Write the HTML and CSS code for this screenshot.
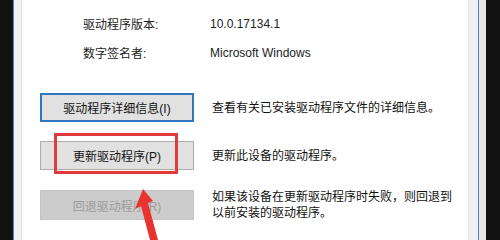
FILE: index.html
```html
<!DOCTYPE html>
<html lang="zh-CN">
<head>
  <meta charset="UTF-8">
  <title>驱动程序</title>
  <link rel="stylesheet" href="styles.css">
</head>
<body>
  <div class="screen">
    <div class="edge-black left"></div>
    <div class="frame-line"></div>
    <div class="frame-gray left-gap"></div>

    <div class="page">
      <div class="props">
        <div class="prop">
          <span class="prop-label">驱动程序版本:</span>
          <span class="prop-value">10.0.17134.1</span>
        </div>
        <div class="prop">
          <span class="prop-label">数字签名者:</span>
          <span class="prop-value">Microsoft Windows</span>
        </div>
      </div>

      <div class="actions">
        <div class="action">
          <button class="btn btn-focus">驱动程序详细信息(I)</button>
          <p class="action-desc">查看有关已安装驱动程序文件的详细信息。</p>
        </div>
        <div class="action">
          <button class="btn">更新驱动程序(P)</button>
          <p class="action-desc">更新此设备的驱动程序。</p>
        </div>
        <div class="action">
          <button class="btn" disabled>回退驱动程序(R)</button>
          <p class="action-desc">如果该设备在更新驱动程序时失败，则回退到<br>以前安装的驱动程序。</p>
        </div>
      </div>
    </div>

    <div class="frame-gray right-gap"></div>
    <div class="frame-line"></div>
    <div class="frame-gray outer-gap"></div>
    <div class="edge-black right"></div>

    <!-- annotation -->
    <div class="highlight"></div>
    <svg class="arrow" width="500" height="240" viewBox="0 0 500 240">
      <polygon points="143,189 135,209 141,206 150,240 158,240 148,203 153,201" fill="#e8332f"/>
    </svg>
  </div>
</body>
</html>
```

FILE: styles.css
```css
body {
  margin: 0;
  padding: 0;
  background: #111;
  font-family: "Liberation Sans", "Noto Sans CJK SC", sans-serif;
  font-size: 12px;
}

.screen {
  position: relative;
  width: 500px;
  height: 240px;
  display: flex;
  overflow: hidden;
}

.edge-black {
  background: #111;
}

.edge-black.left {
  width: 13px;
}

.edge-black.right {
  width: 14px;
}

.frame-line {
  width: 1px;
  background: #4f86c2;
}

.frame-gray {
  background: #eef0f2;
}

.left-gap {
  width: 8px;
  border-right: 1px solid #e2e2e2;
  box-sizing: border-box;
}

.right-gap {
  width: 10px;
  border-left: 1px solid #e6e6e6;
  box-sizing: border-box;
}

.outer-gap {
  width: 7px;
  background: #e4e6e8;
}

.page {
  width: 446px;
  background: #fff;
  padding: 9px 0 0 18px;
  box-sizing: border-box;
}

.props {
  margin-left: 43px;
}

.prop {
  display: flex;
  height: 29px;
  align-items: center;
  color: #222;
}

.prop-label {
  width: 127px;
}

.actions {
  margin-top: 26px;
  display: flex;
  flex-direction: column;
  gap: 19px;
}

.action {
  display: flex;
  align-items: center;
  gap: 18px;
}

.btn {
  width: 154px;
  height: 29px;
  flex-shrink: 0;
  background: #e1e1e1;
  border: 1px solid #adadad;
  font-family: inherit;
  font-size: 12px;
  color: #111;
  padding: 0;
}

.btn-focus {
  border: 2px solid #2f78c0;
}

.btn:disabled {
  background: #cccccc;
  border-color: #c4c4c4;
  color: #9b9b9b;
  height: 30px;
}

.action-desc {
  margin: 0;
  line-height: 16px;
  color: #111;
}

.highlight {
  position: absolute;
  left: 54px;
  top: 133px;
  width: 124px;
  height: 41px;
  border: 3px solid #e23b3e;
  box-sizing: border-box;
}

.arrow {
  position: absolute;
  left: 0;
  top: 0;
}
```
